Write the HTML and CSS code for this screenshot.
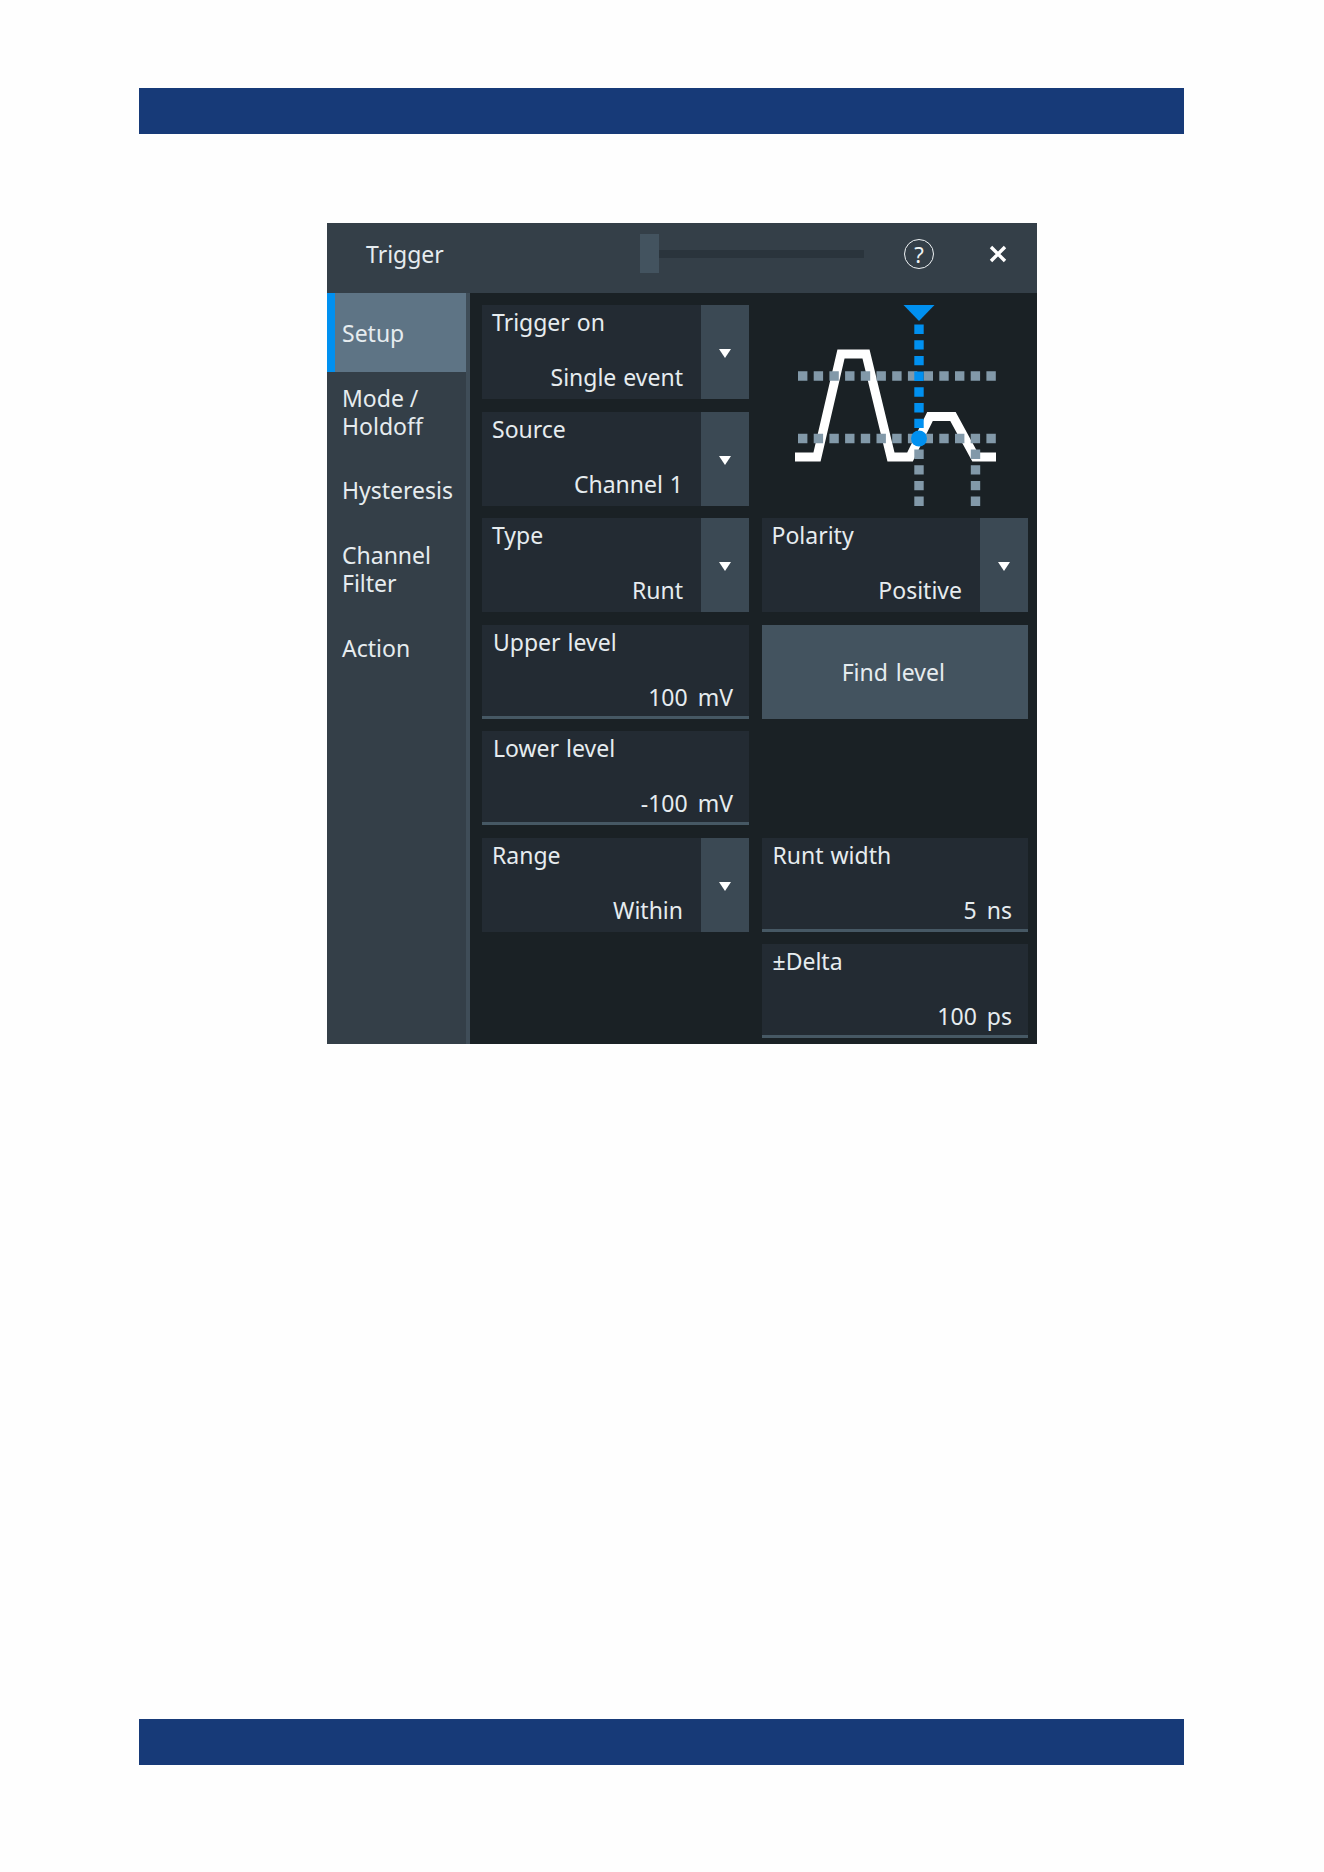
FILE: index.html
```html
<!DOCTYPE html>
<html lang="en">
<head>
    <meta charset="UTF-8">
    <title>Trigger</title>
    <link rel="stylesheet" href="styles.css">
</head>
<body>
    <div class="band band-top"></div>

    <section class="panel">
        <header class="titlebar">
            <span class="title">Trigger</span>
            <div class="slider"><div class="slider-handle"></div></div>
            <span class="help">?</span>
            <svg class="close" width="18" height="18" viewBox="0 0 18 18">
                <path d="M2 2 L16 16 M16 2 L2 16" stroke="#fff" stroke-width="3.4" fill="none"/>
            </svg>
        </header>

        <div class="body">
            <nav class="sidebar">
                <div class="tab active">Setup</div>
                <div class="tab">Mode /<br>Holdoff</div>
                <div class="tab">Hysteresis</div>
                <div class="tab">Channel<br>Filter</div>
                <div class="tab">Action</div>
            </nav>

            <main class="content">
                <div class="field select left">
                    <div class="field-text">
                        <span class="label">Trigger on</span>
                        <span class="value">Single event</span>
                    </div>
                    <div class="arrow-box"><span class="arrow"></span></div>
                </div>

                <div class="diagram">
                    <svg width="267" height="201" viewBox="0 0 267 201">
                        <!-- signal -->
                        <path d="M33 152 L55 152 L79 49 L104 49 L129 152 L148 152 L168 111.500 L191 111.500 L213 152 L234 152" stroke="#fff" stroke-width="9" fill="none"/>
                        <!-- levels -->
                        <line x1="36" y1="71" x2="234" y2="71" class="dots"/>
                        <line x1="36" y1="133.500" x2="234" y2="133.500" class="dots"/>
                        <line x1="213.500" y1="144.500" x2="213.500" y2="201" class="dots"/>
                        <line x1="157" y1="144.500" x2="157" y2="201" class="dots"/>
                        <!-- trigger position -->
                        <line x1="157" y1="19.500" x2="157" y2="128" class="dots-blue"/>
                        <path d="M141.500 0 H172.500 L157 16 Z" fill="#0090f0"/>
                        <circle cx="157" cy="133.500" r="8" fill="#0090f0"/>
                    </svg>
                </div>

                <div class="field select left">
                    <div class="field-text">
                        <span class="label">Source</span>
                        <span class="value">Channel 1</span>
                    </div>
                    <div class="arrow-box"><span class="arrow"></span></div>
                </div>

                <div class="field select left">
                    <div class="field-text">
                        <span class="label">Type</span>
                        <span class="value">Runt</span>
                    </div>
                    <div class="arrow-box"><span class="arrow"></span></div>
                </div>

                <div class="field select right">
                    <div class="field-text">
                        <span class="label">Polarity</span>
                        <span class="value">Positive</span>
                    </div>
                    <div class="arrow-box"><span class="arrow"></span></div>
                </div>

                <div class="field number left">
                    <div class="field-text">
                        <span class="label">Upper level</span>
                        <span class="value">100<span class="unit">mV</span></span>
                    </div>
                </div>

                <div class="find-btn right">Find level</div>

                <div class="field number left">
                    <div class="field-text">
                        <span class="label">Lower level</span>
                        <span class="value">-100<span class="unit">mV</span></span>
                    </div>
                </div>

                <div class="field select left">
                    <div class="field-text">
                        <span class="label">Range</span>
                        <span class="value">Within</span>
                    </div>
                    <div class="arrow-box"><span class="arrow"></span></div>
                </div>

                <div class="field number right">
                    <div class="field-text">
                        <span class="label">Runt width</span>
                        <span class="value">5<span class="unit">ns</span></span>
                    </div>
                </div>

                <div class="field number right">
                    <div class="field-text">
                        <span class="label">±Delta</span>
                        <span class="value">100<span class="unit">ps</span></span>
                    </div>
                </div>
            </main>
        </div>
    </section>

    <div class="band band-bottom"></div>
</body>
</html>
```

FILE: styles.css
```css
/* General Styles */
body {
    margin: 0;
    background: #fefefe;
    font-family: "Noto Sans", sans-serif;
    font-size: 23px;
    color: #e6ecef;
}

/* Blue page bands */
.band {
    height: 46px;
    margin: 0 140px 0 138.500px;
    background: #173a78;
}

.band-top {
    margin-top: 88px;
}

.band-bottom {
    margin-top: 675px;
}

/* Dialog */
.panel {
    width: 710px;
    height: 821px;
    margin: 89px 0 0 327px;
    overflow: hidden;
    background: #1a2125;
}

.titlebar {
    display: flex;
    align-items: center;
    box-sizing: border-box;
    height: 70px;
    padding-bottom: 8px;
    background: #343f48;
}

.title {
    width: 313px;
    padding-left: 39px;
    box-sizing: border-box;
}

.slider {
    position: relative;
    width: 224px;
    height: 8px;
    background: #2a343c;
}

.slider-handle {
    position: absolute;
    left: 0;
    top: -16px;
    width: 19px;
    height: 39px;
    background: #43535f;
}

.help {
    width: 28px;
    height: 28px;
    margin-left: 40px;
    border: 1.500px solid #eef2f4;
    border-radius: 50%;
    color: #eef2f4;
    font-size: 22px;
    line-height: 28px;
    text-align: center;
}

.close {
    margin-left: 55px;
}

.body {
    display: flex;
    height: 751px;
}

/* Left tabs */
.sidebar {
    width: 139px;
    flex-shrink: 0;
    border-right: 4px solid #3f4d58;
    background: #343f48;
}

.tab {
    display: flex;
    align-items: center;
    box-sizing: border-box;
    height: 78.700px;
    padding: 2px 0 0 15px;
    line-height: 28.500px;
}

.tab.active {
    padding-left: 7px;
    border-left: 8px solid #0090f0;
    background: #5e7485;
}

/* Settings grid */
.content {
    display: grid;
    grid-template-columns: 267px 266.500px;
    grid-auto-rows: 94px;
    column-gap: 12.500px;
    row-gap: 12.500px;
    padding: 12px 0 0 12px;
}

.left {
    grid-column: 1;
}

.right {
    grid-column: 2;
}

.field {
    display: flex;
    box-sizing: border-box;
    background: #232b33;
}

.field-text {
    display: flex;
    flex: 1;
    flex-direction: column;
    justify-content: space-between;
}

.label, .value {
    line-height: 32px;
    word-spacing: 1px;
}

.value {
    text-align: right;
}

.unit {
    margin-left: 10px;
}

.select .field-text {
    padding: 1px 18px 6px 10px;
}

.number {
    border-bottom: 3px solid #465864;
}

.number .field-text {
    padding: 1px 16px 3px 11px;
}

.arrow-box {
    display: flex;
    align-items: center;
    justify-content: center;
    width: 48px;
    background: #3b4954;
}

.arrow {
    width: 0;
    height: 0;
    margin-top: 3px;
    border-left: 6.500px solid transparent;
    border-right: 6.500px solid transparent;
    border-top: 9px solid #fff;
}

.find-btn {
    display: flex;
    align-items: center;
    justify-content: center;
    padding-right: 3px;
    word-spacing: 2px;
    background: #43535f;
}

.diagram {
    grid-column: 2;
    grid-row: span 2;
}

.diagram svg {
    display: block;
}

.dots, .dots-blue {
    stroke-width: 9.400px;
    stroke-dasharray: 9.400 6.300;
}

.dots {
    stroke: #8299a9;
}

.dots-blue {
    stroke: #0090f0;
}
```
